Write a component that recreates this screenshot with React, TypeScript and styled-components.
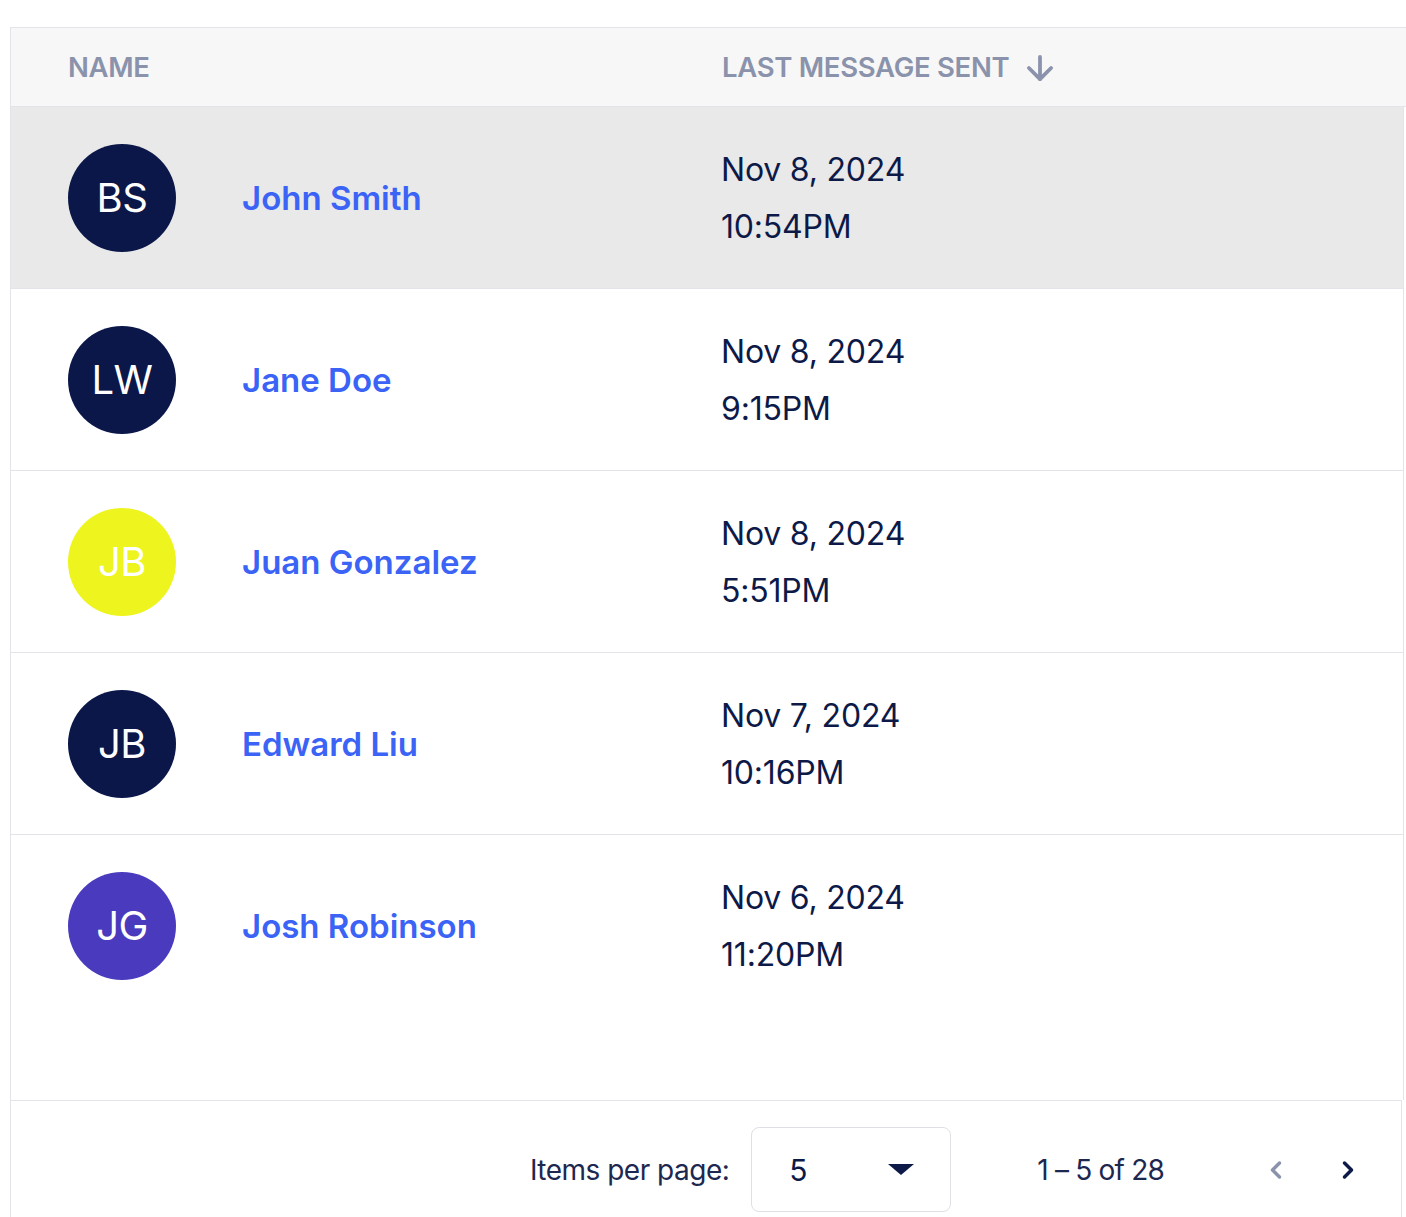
import { FC } from 'react';
import styled, { createGlobalStyle } from 'styled-components';
import { ArrowDown, ChevronLeft, ChevronRight } from 'lucide-react';

interface Contact {
  initials: string;
  name: string;
  date: string;
  time: string;
  color: string;
  selected?: boolean;
}

const contacts: Contact[] = [
  { initials: 'BS', name: 'John Smith', date: 'Nov 8, 2024', time: '10:54PM', color: '#0a1748', selected: true },
  { initials: 'LW', name: 'Jane Doe', date: 'Nov 8, 2024', time: '9:15PM', color: '#0a1748' },
  { initials: 'JB', name: 'Juan Gonzalez', date: 'Nov 8, 2024', time: '5:51PM', color: '#eef41e' },
  { initials: 'JB', name: 'Edward Liu', date: 'Nov 7, 2024', time: '10:16PM', color: '#0a1748' },
  { initials: 'JG', name: 'Josh Robinson', date: 'Nov 6, 2024', time: '11:20PM', color: '#4a3abd' },
];

const GlobalStyle = createGlobalStyle`
  body {
    margin: 0;
    background: #ffffff;
    font-family: "Inter", "Liberation Sans", sans-serif;
  }
`;

const App: FC = (): JSX.Element => {
  return (
    <>
      <GlobalStyle />
      <TableWrapper>
        <HeaderRow>
          <HeaderCell $indent>NAME</HeaderCell>
          <HeaderCell>
            LAST MESSAGE SENT
            <ArrowDown size={38} strokeWidth={2.4} />
          </HeaderCell>
        </HeaderRow>
        <Body>
          {contacts.map((c, i) => (
            <Row key={i} $selected={c.selected} $last={i === contacts.length - 1}>
              <NameCell>
                <Avatar $bg={c.color}>{c.initials}</Avatar>
                <NameLink href="#">{c.name}</NameLink>
              </NameCell>
              <DateCell>
                <span>{c.date}</span>
                <span>{c.time}</span>
              </DateCell>
            </Row>
          ))}
        </Body>
        <Footer>
          <FooterLabel>Items per page:</FooterLabel>
          <PageSelect>
            <span>5</span>
            <Caret />
          </PageSelect>
          <RangeText>1 – 5 of 28</RangeText>
          <PagerButton $disabled aria-label="Previous page">
            <ChevronLeft size={28} strokeWidth={3} />
          </PagerButton>
          <PagerButton aria-label="Next page">
            <ChevronRight size={28} strokeWidth={3} />
          </PagerButton>
        </Footer>
      </TableWrapper>
    </>
  );
};

const TableWrapper = styled.div`
  margin: 27px 0 0 10px;
  width: 1396px;
`;

const HeaderRow = styled.div`
  display: grid;
  grid-template-columns: 711px 1fr;
  align-items: center;
  height: 78px;
  background: #f7f7f7;
  border-top: 1px solid #e3e4ea;
  border-bottom: 1px solid #e3e4ea;
  border-left: 1px solid #e3e4ea;
`;

const HeaderCell = styled.div<{ $indent?: boolean }>`
  display: flex;
  align-items: center;
  gap: 12px;
  padding-left: ${(p) => (p.$indent ? '57px' : '0')};
  font-size: 27.5px;
  font-weight: 600;
  letter-spacing: -0.3px;
  color: #8a93ab;
  svg {
    margin-top: 2px;
  }
`;

const Body = styled.div`
  display: flex;
  flex-direction: column;
  height: 993px;
  width: 1392px;
  border-left: 1px solid #e3e4ea;
  border-right: 1px solid #e3e4ea;
`;

const Row = styled.div<{ $selected?: boolean; $last?: boolean }>`
  display: grid;
  grid-template-columns: 710px 1fr;
  align-items: center;
  height: 181px;
  flex-shrink: 0;
  background: ${(p) => (p.$selected ? '#e9e9e9' : '#ffffff')};
  border-bottom: ${(p) => (p.$last ? 'none' : '1px solid #e3e4ea')};
`;

const NameCell = styled.div`
  display: flex;
  align-items: center;
  padding-left: 57px;
  gap: 66px;
`;

const Avatar = styled.div<{ $bg: string }>`
  width: 108px;
  height: 108px;
  border-radius: 50%;
  background: ${(p) => p.$bg};
  color: #ffffff;
  display: flex;
  align-items: center;
  justify-content: center;
  font-size: 40px;
  font-weight: 400;
  letter-spacing: -0.5px;
`;

const NameLink = styled.a`
  font-size: 33px;
  font-weight: 600;
  color: #3b63f6;
  text-decoration: none;
`;

const DateCell = styled.div`
  display: flex;
  flex-direction: column;
  font-size: 32px;
  line-height: 57px;
  color: #0d1a48;
  letter-spacing: -0.2px;
`;

const Footer = styled.div`
  display: flex;
  align-items: center;
  justify-content: flex-end;
  height: 130px;
  width: 1392px;
  padding: 8px 33px 0 0;
  box-sizing: border-box;
  border-top: 1px solid #e3e4ea;
  border-left: 1px solid #e3e4ea;
  border-right: 1px solid #e3e4ea;
  color: #1d2850;
  font-size: 28px;
  letter-spacing: -0.5px;
`;

const FooterLabel = styled.span`
  margin-right: 22px;
`;

const PageSelect = styled.div`
  display: flex;
  align-items: center;
  justify-content: space-between;
  width: 200px;
  height: 85px;
  box-sizing: border-box;
  padding: 0 36px 0 37px;
  border: 1px solid #dfe0e6;
  border-radius: 8px;
  font-size: 30px;
  color: #0d1a48;
  margin-right: 86px;
`;

const Caret = styled.span`
  width: 0;
  height: 0;
  border-left: 13px solid transparent;
  border-right: 13px solid transparent;
  border-top: 11px solid #0d1a48;
`;

const RangeText = styled.span`
  margin-right: 60px;
  letter-spacing: -0.8px;
`;

const PagerButton = styled.button<{ $disabled?: boolean }>`
  display: flex;
  align-items: center;
  justify-content: center;
  background: none;
  border: none;
  padding: 0;
  width: 40px;
  height: 40px;
  margin-left: 32px;
  cursor: pointer;
  color: ${(p) => (p.$disabled ? '#8a93ab' : '#0d1a48')};
`;

export default App;
